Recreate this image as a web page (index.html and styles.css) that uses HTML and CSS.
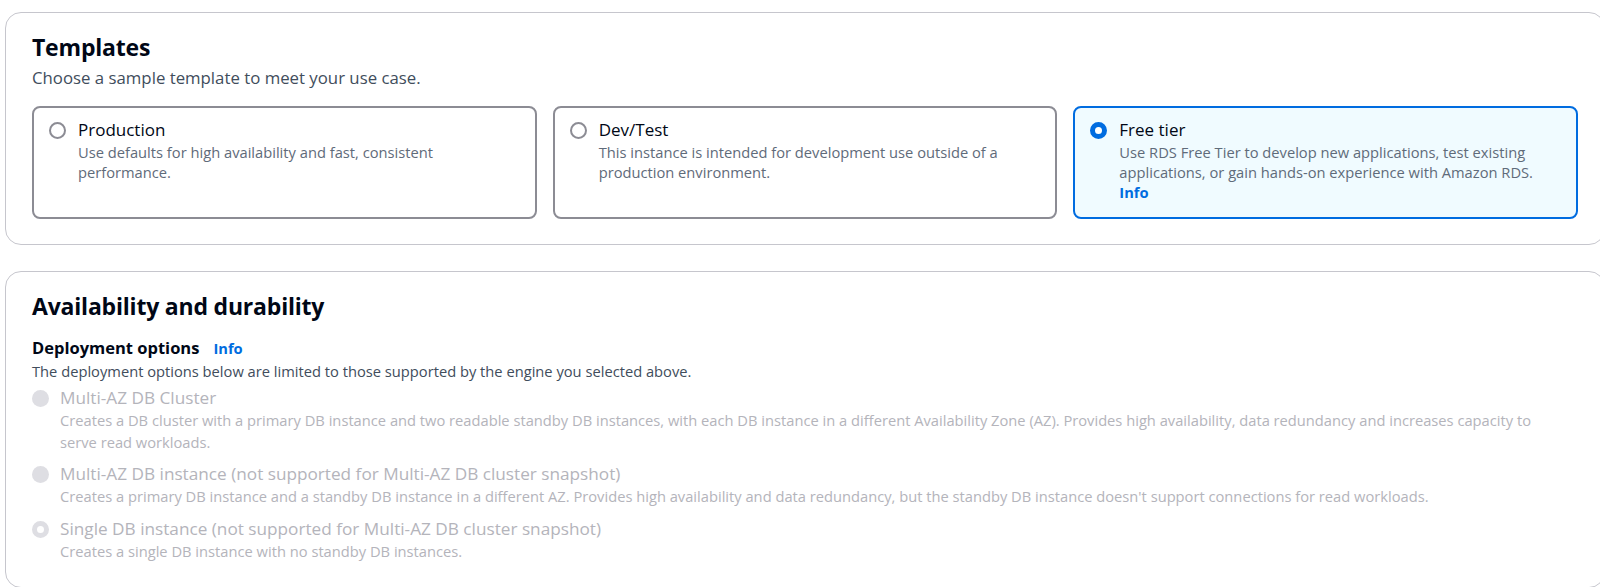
FILE: index.html
```html
<!DOCTYPE html>
<html lang="en">
<head>
<meta charset="utf-8">
<title>Templates</title>
<link rel="stylesheet" href="styles.css">
</head>
<body>
<div class="page">
  <section class="card card-templates">
    <h2 class="card-title">Templates</h2>
    <p class="card-desc">Choose a sample template to meet your use case.</p>
    <div class="tiles">
      <div class="tile">
        <span class="radio"></span>
        <div class="tile-body">
          <div class="tile-label">Production</div>
          <div class="tile-desc">Use defaults for high availability and fast, consistent performance.</div>
        </div>
      </div>
      <div class="tile">
        <span class="radio"></span>
        <div class="tile-body">
          <div class="tile-label">Dev/Test</div>
          <div class="tile-desc">This instance is intended for development use outside of a production environment.</div>
        </div>
      </div>
      <div class="tile tile-selected">
        <span class="radio radio-checked"></span>
        <div class="tile-body">
          <div class="tile-label">Free tier</div>
          <div class="tile-desc">Use RDS Free Tier to develop new applications, test existing applications, or gain hands-on experience with Amazon RDS.</div>
          <a class="info-link">Info</a>
        </div>
      </div>
    </div>
  </section>

  <section class="card card-availability">
    <h2 class="card-title">Availability and durability</h2>
    <div class="field-head">
      <span class="field-label">Deployment options</span>
      <a class="info-link">Info</a>
    </div>
    <p class="field-desc">The deployment options below are limited to those supported by the engine you selected above.</p>
    <div class="options">
      <div class="option">
        <span class="radio radio-disabled"></span>
        <div class="option-body">
          <div class="option-label">Multi-AZ DB Cluster</div>
          <div class="option-desc">Creates a DB cluster with a primary DB instance and two readable standby DB instances, with each DB instance in a different Availability Zone (AZ). Provides high availability, data redundancy and increases capacity to serve read workloads.</div>
        </div>
      </div>
      <div class="option">
        <span class="radio radio-disabled"></span>
        <div class="option-body">
          <div class="option-label">Multi-AZ DB instance (not supported for Multi-AZ DB cluster snapshot)</div>
          <div class="option-desc">Creates a primary DB instance and a standby DB instance in a different AZ. Provides high availability and data redundancy, but the standby DB instance doesn't support connections for read workloads.</div>
        </div>
      </div>
      <div class="option">
        <span class="radio radio-disabled-checked"></span>
        <div class="option-body">
          <div class="option-label">Single DB instance (not supported for Multi-AZ DB cluster snapshot)</div>
          <div class="option-desc">Creates a single DB instance with no standby DB instances.</div>
        </div>
      </div>
    </div>
  </section>
</div>
</body>
</html>
```
FILE: styles.css
```css
html, body {
  margin: 0;
  padding: 0;
  background: #ffffff;
  overflow: hidden;
}

body {
  font-family: "Open Sans", "Noto Sans", sans-serif;
  color: #000716;
}

.page {
  width: 1600px;
  padding: 12px 0 0 5px;
  display: flex;
  flex-direction: column;
  gap: 26px;
}

.card {
  box-sizing: border-box;
  width: 1600px;
  border: 1px solid #c6c6cd;
  border-radius: 16px;
  padding: 20px 26px 25px 26px;
  background: #fff;
}

.card-availability {
  padding-bottom: 25px;
}

.card-title {
  margin: 0;
  font-size: 23px;
  line-height: 28px;
  font-weight: 700;
  color: #000716;
  letter-spacing: -0.2px;
}

.card-desc {
  margin: 5px 0 0 0;
  font-size: 16.8px;
  line-height: 24px;
  color: #414d5c;
}

.tiles {
  margin-top: 16px;
  display: grid;
  grid-template-columns: repeat(3, 1fr);
  gap: 16px;
}

.tile {
  border: 2px solid #8c8c94;
  border-radius: 8px;
  padding: 10px 16px 15px 15px;
  display: flex;
  gap: 12px;
  min-height: 84px;
}

.tile-selected {
  border-color: #006ce0;
  background: #f0fbff;
}

.radio {
  flex: none;
  box-sizing: border-box;
  width: 17px;
  height: 17px;
  border-radius: 50%;
  border: 2px solid #8c8c94;
  background: #fff;
  margin-top: 4px;
}

.radio-checked {
  border: 5px solid #006ce0;
  background: #fff;
}

.tile-body {
  display: flex;
  flex-direction: column;
}

.tile-label {
  font-size: 17px;
  line-height: 24px;
  color: #000716;
}

.tile-desc {
  font-size: 14.7px;
  line-height: 20px;
  color: #5f6b7a;
}

.info-link {
  font-size: 14.7px;
  line-height: 20px;
  font-weight: 700;
  color: #006ce0;
  text-decoration: none;
}

.field-head {
  margin-top: 16px;
  display: flex;
  align-items: baseline;
  gap: 14px;
}

.field-label {
  font-size: 16.5px;
  line-height: 24px;
  font-weight: 700;
  color: #000716;
}

.field-desc {
  margin: 0;
  font-size: 14.7px;
  line-height: 22px;
  color: #414d5c;
}

.options {
  margin-top: 4px;
  display: flex;
  flex-direction: column;
  gap: 9px;
}

.option {
  display: flex;
  gap: 11px;
}

.radio-disabled {
  border: none;
  background: #dedee3;
}

.radio-disabled-checked {
  border: 5px solid #dedee3;
  background: #fff;
}

.option-label {
  font-size: 17.2px;
  line-height: 24px;
  color: #b4b4bb;
}

.option-desc {
  font-size: 14.7px;
  line-height: 21.5px;
  color: #b4b4bb;
  max-width: 1500px;
}
```
